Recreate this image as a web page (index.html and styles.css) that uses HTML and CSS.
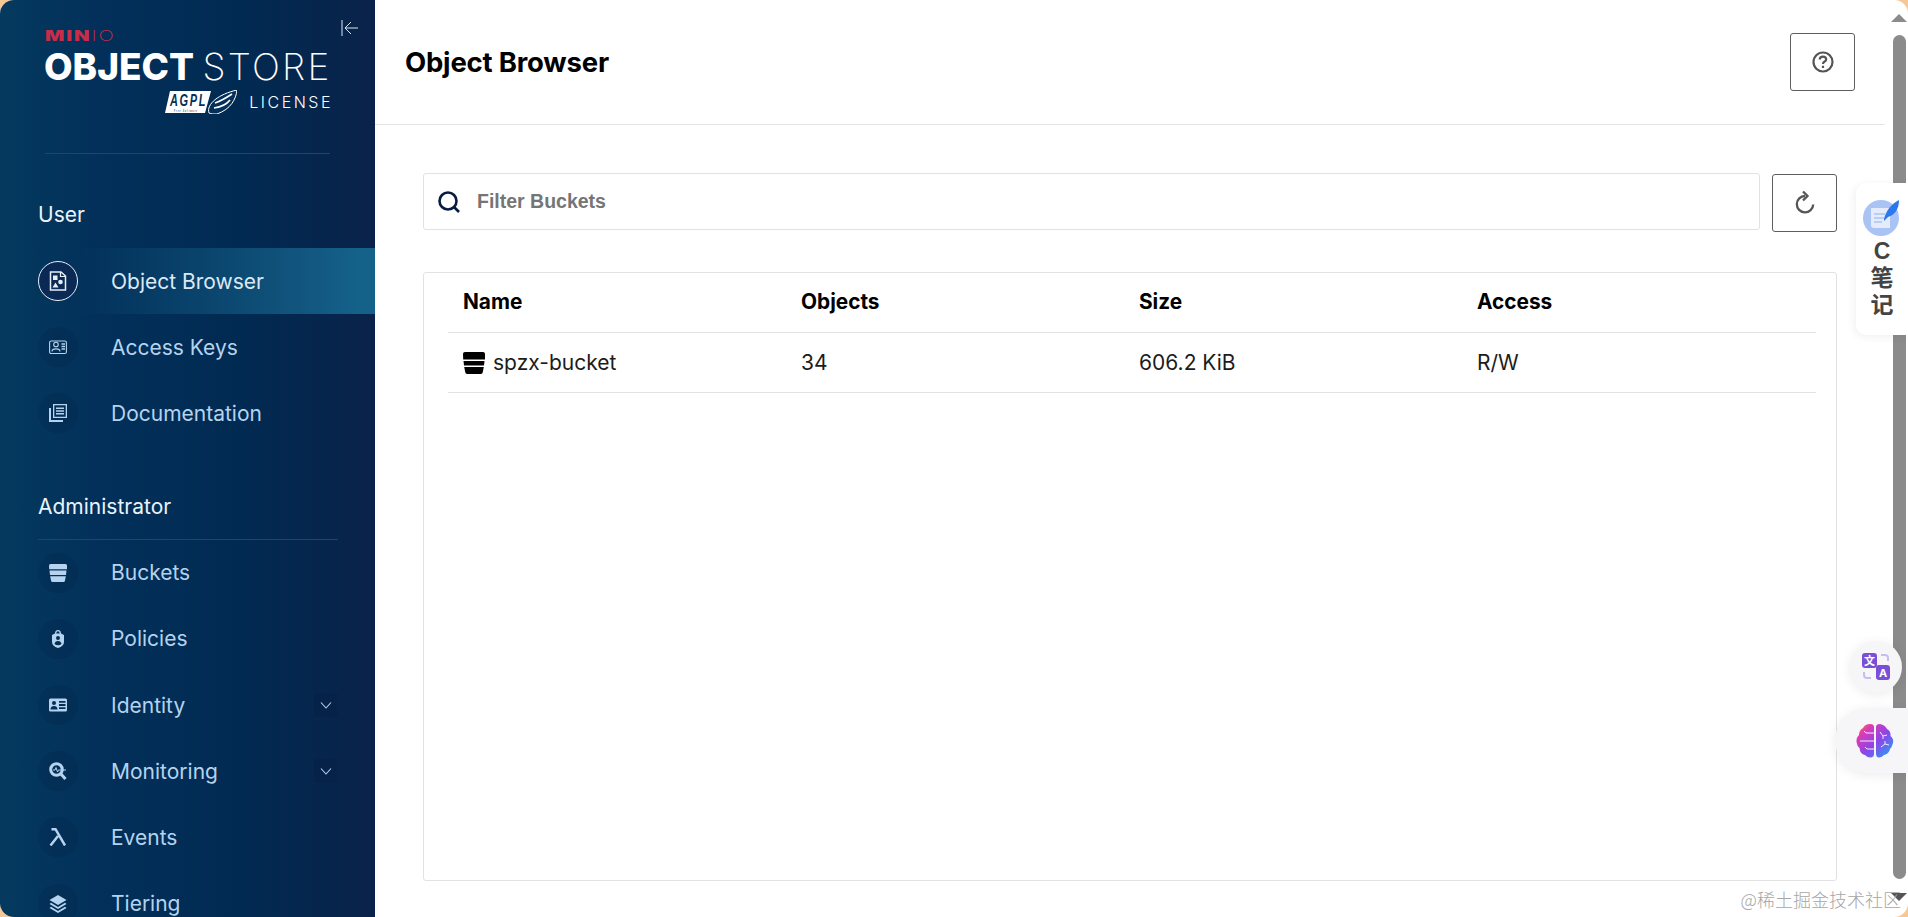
FILE: index.html
```html
<!DOCTYPE html>
<html lang="en">
<head>
  <meta charset="UTF-8" />
  <title>Object Browser</title>
  <link rel="stylesheet" href="styles.css">
</head>
<body>
<div class="page">

  <aside class="sidebar">
    <div class="brand">
      <div class="logo">
        <div class="logo-minio"><b>MIN</b><span>IO</span></div>
        <div class="logo-product"><b>OBJECT</b> <span>STORE</span></div>
        <div class="logo-license">
          <svg class="agpl" width="72" height="24" viewBox="0 0 72 24">
            <path d="M5 1H46L40 23H0Z" fill="#fff"/>
            <text x="5" y="15.500" class="agpl-text" textLength="37" lengthAdjust="spacingAndGlyphs">AGPL</text>
            <text x="9" y="21.500" class="agpl-small" textLength="24" lengthAdjust="spacingAndGlyphs">Free Software</text>
            <path d="M44 23C41 14 54 4 72 0C71 9 66 19 52 24C49 24 46 24 44 23Z" fill="#04305a" stroke="#fff" stroke-width="1"/>
            <path d="M50 13C56 11 61 8 67 4M49 18C56 17 62 14 65 10" fill="none" stroke="#fff" stroke-width="1.600"/>
          </svg>
          <span>LICENSE</span>
        </div>
      </div>
      <button class="collapse" title="Collapse">
        <svg width="18" height="18" viewBox="0 0 18 18" fill="none" stroke="currentColor" stroke-width="1">
          <path d="M1 1V17M17 9H4M10 3L4 9L10 15"/>
        </svg>
      </button>
    </div>

    <div class="nav-label nav-label-user">User</div>
    <a class="nav-item active">
      <span class="nav-icon">
        <svg width="18" height="20" viewBox="0 0 18 20"><path d="M1.500 1H12L16.500 5V19H1.500Z" fill="none" stroke="currentColor" stroke-width="1.500"/><path d="M11.500 1V5.500H16.500" fill="none" stroke="currentColor" stroke-width="1.200"/><rect x="4" y="4.500" width="4.500" height="4.500" fill="currentColor"/><circle cx="11.500" cy="11" r="2.300" fill="currentColor"/><path d="M6.500 11.500L9.500 16.500H3.500Z" fill="currentColor"/></svg>
      </span>
      <span>Object Browser</span>
    </a>
    <a class="nav-item">
      <span class="nav-icon">
        <svg width="18" height="18" viewBox="0 0 18 18" fill="none" stroke="currentColor" stroke-width="1.100"><rect x="0.600" y="3" width="16.800" height="12.500" rx="1.500"/><circle cx="7" cy="6.500" r="2.300"/><path d="M3 13.500C3 10 11 10 11 13.500"/><path d="M12.500 6H16M12.500 8.500H16M12.500 11H16" stroke-width="1.300"/></svg>
      </span>
      <span>Access Keys</span>
    </a>
    <a class="nav-item">
      <span class="nav-icon">
        <svg width="18" height="18" viewBox="0 0 18 18" fill="currentColor"><path fill-rule="evenodd" d="M4 0H18V14H4ZM5.300 1.300V12.700H16.700V1.300ZM7 3.500H15V5H7ZM7 6.300H15V7.800H7ZM7 9.100H15V10.600H7Z"/><path d="M0 4H2V16H14V18H0Z"/></svg>
      </span>
      <span>Documentation</span>
    </a>

    <div class="nav-label nav-label-admin">Administrator</div>
    <a class="nav-item">
      <span class="nav-icon">
        <svg width="18" height="18" viewBox="0 0 18 18" fill="currentColor"><path d="M0 1.500Q0 0 1.500 0H16.500Q18 0 18 1.500V5.200H0.200ZM0.500 6.500H17.500L17 11H1ZM1.200 12.300H16.800L16 16.500Q15.800 18 14.500 18H3.500Q2.200 18 2 16.500Z"/></svg>
      </span>
      <span>Buckets</span>
    </a>
    <a class="nav-item">
      <span class="nav-icon">
        <svg width="18" height="18" viewBox="0 0 18 18" fill="currentColor"><path fill-rule="evenodd" d="M9 0Q12 0 12 3.500L15 5V12Q15 16 9 18Q3 16 3 12V5L6 3.500Q6 0 9 0ZM9 1.300Q7.300 1.300 7.300 3.500H10.700Q10.700 1.300 9 1.300ZM9 6A2 2 0 1 0 9 10A2 2 0 1 0 9 6ZM5.500 14Q9 16.500 12.500 14Q12 11 9 11Q6 11 5.500 14Z"/></svg>
      </span>
      <span>Policies</span>
    </a>
    <a class="nav-item">
      <span class="nav-icon">
        <svg width="18" height="18" viewBox="0 0 18 18" fill="currentColor"><path fill-rule="evenodd" d="M1.500 2.500H16.500Q18 2.500 18 4V14Q18 15.500 16.500 15.500H1.500Q0 15.500 0 14V4Q0 2.500 1.500 2.500ZM5 5A2 2 0 1 0 5 9A2 2 0 1 0 5 5ZM1.500 13.500H8.500Q8.500 10 5 10Q1.500 10 1.500 13.500ZM10 5V6.800H16.500V5ZM10 8.100V9.900H16.500V8.100ZM10 11.200V13H16.500V11.200Z"/></svg>
      </span>
      <span>Identity</span>
      <span class="chevron"><svg width="12" height="7" viewBox="0 0 12 7" fill="none" stroke="currentColor" stroke-width="1.100"><path d="M1 0.500L6 6L11 0.500"/></svg></span>
    </a>
    <a class="nav-item">
      <span class="nav-icon">
        <svg width="18" height="18" viewBox="0 0 18 18" fill="none" stroke="currentColor"><circle cx="7.500" cy="7.500" r="5.800" stroke-width="3"/><path d="M11.500 11.500L16.500 17" stroke-width="3"/><path d="M4 8H6L7 5.500L8.500 10L9.500 8H17" stroke-width="1" /></svg>
      </span>
      <span>Monitoring</span>
      <span class="chevron"><svg width="12" height="7" viewBox="0 0 12 7" fill="none" stroke="currentColor" stroke-width="1.100"><path d="M1 0.500L6 6L11 0.500"/></svg></span>
    </a>
    <a class="nav-item">
      <span class="nav-icon">
        <svg width="18" height="18" viewBox="0 0 18 18" fill="none" stroke="currentColor" stroke-width="2.500"><path d="M2.500 1.200H6.500L16 17.500M9 8L1.500 17.500"/></svg>
      </span>
      <span>Events</span>
    </a>
    <a class="nav-item">
      <span class="nav-icon">
        <svg width="18" height="18" viewBox="0 0 18 18" fill="currentColor"><path d="M9 0L17.500 5L9 10L0.500 5Z"/><path d="M2 7.800L9 12L16 7.800L17.500 9L9 14L0.500 9Z"/><path d="M2 11.800L9 16L16 11.800L17.500 13L9 18L0.500 13Z"/></svg>
      </span>
      <span>Tiering</span>
    </a>
  </aside>

  <main class="main">
    <header class="topbar">
      <h1>Object Browser</h1>
      <button class="btn-outline btn-help" title="Help">
        <svg width="22" height="22" viewBox="0 0 22 22" fill="none" stroke="currentColor" stroke-width="2.200"><circle cx="11" cy="11" r="9.500"/><path d="M7.800 8.500Q7.800 5.600 11 5.600Q14.200 5.600 14.200 8.300Q14.200 9.800 12.400 10.700Q11 11.400 11 13"/><path d="M11 14.800V17"/></svg>
      </button>
    </header>

    <div class="content">
      <div class="filter-row">
        <div class="filter">
          <svg width="22" height="22" viewBox="0 0 22 22" fill="none" stroke="#081c42" stroke-width="2.600"><circle cx="10" cy="10" r="8.500"/><path d="M16 16L21 21"/></svg>
          <span>Filter Buckets</span>
        </div>
        <button class="btn-outline btn-refresh" title="Refresh">
          <svg width="20" height="24" viewBox="0 0 20 24" fill="none" stroke="currentColor" stroke-width="2.300"><path d="M10 5A8.200 8.200 0 1 0 18.200 13.500"/><path d="M8 0.500L12.500 5L8 9.500"/></svg>
        </button>
      </div>

      <section class="buckets">
        <div class="row row-head">
          <div>Name</div>
          <div>Objects</div>
          <div>Size</div>
          <div>Access</div>
        </div>
        <div class="row">
          <div class="bucket-name">
            <svg width="22" height="22" viewBox="0 0 22 22" fill="#000"><path d="M0 2Q0 0 2 0H20Q22 0 22 2V7.500H0.200ZM0.500 9H21.500L21 13.500H1ZM1.200 15H20.800L19.800 20Q19.600 22 17.800 22H4.200Q2.400 22 2.200 20Z"/></svg>
            <span>spzx-bucket</span>
          </div>
          <div>34</div>
          <div>606.2 KiB</div>
          <div>R/W</div>
        </div>
      </section>
    </div>
  </main>

  <div class="scrollbar">
    <i class="arrow-up"></i>
    <i class="thumb"></i>
    <i class="arrow-down"></i>
  </div>

  <div class="note-widget">
    <svg width="44" height="40" viewBox="0 0 44 40">
      <circle cx="20" cy="21" r="18" fill="#a9c3f4"/>
      <path d="M10 11H29V31L13 31Q10 31 10 28Z" fill="#e4ecfb"/>
      <path d="M13 17H24M13 21H23M13 25H21" stroke="#a9c3f4" stroke-width="1.300"/>
      <path d="M23 22C25 14 30 7 38 3C38 12 34 18 27 20L23 24Z" fill="#2d77ee"/>
    </svg>
    <span>C</span><span>笔</span><span>记</span>
  </div>

  <button class="float-btn float-translate" title="Translate">
    <svg width="28" height="28" viewBox="0 0 28 28">
      <rect x="0" y="0" width="15" height="15" rx="3" fill="#7a4fd8"/>
      <text x="7.500" y="11.500" class="icon-text">文</text>
      <rect x="14" y="12" width="14" height="15" rx="3" fill="#7a4fd8"/>
      <text x="21" y="24" class="icon-text">A</text>
      <path d="M19 2H23Q26 2 26 5V8M2 19V22Q2 25 5 25H9" fill="none" stroke="#c9bdf0" stroke-width="2"/>
    </svg>
  </button>

  <button class="float-btn float-brain" title="AI">
    <svg width="38" height="34" viewBox="0 0 38 34">
      <defs>
        <linearGradient id="brainGrad" x1="0" y1="0" x2="1" y2="1">
          <stop offset="0" stop-color="#f58a24"/>
          <stop offset="0.220" stop-color="#dc3bb4"/>
          <stop offset="0.550" stop-color="#8a46ea"/>
          <stop offset="0.950" stop-color="#2aa0f5"/>
        </linearGradient>
      </defs>
      <path d="M18 3Q18 0 14 0Q9 0 7 4Q3 6 3 11Q0 14 0.500 18Q1 22 3.500 24Q4 30 9 31Q12 34 15 33.500Q18 33 18 30ZM20 3Q20 0 24 0Q29 1 31 5Q35 7 34.500 12Q38 15 37 19Q36 23 34 25Q33 30 28 31Q25 34 22 33.500Q20 33 20 30Z" fill="url(#brainGrad)"/>
      <path d="M18 9H10L8 7M18 17H4M18 25H11L9 23M24 8L27 12L31 11M27 12V15M25 23L29 20L33 21M29 20V17" fill="none" stroke="#f6e9fb" stroke-width="1"/>
    </svg>
  </button>

  <div class="watermark">@稀土掘金技术社区</div>
</div>
</body>
</html>
```

FILE: styles.css
```css
* { box-sizing: border-box; margin: 0; padding: 0; }
html, body { height: 100%; overflow: hidden; }
body {
  background: #f6c896;
  font-family: Inter, sans-serif;
  color: #000;
}
button { font: inherit; background: none; cursor: pointer; }

.page {
  position: relative;
  height: 917px;
  display: flex;
  background: #fff;
  border-radius: 14px;
  overflow: hidden;
}

/* sidebar */
.sidebar {
  width: 375px;
  flex: none;
  height: 100%;
  overflow: hidden;
  background: linear-gradient(90deg, #053a5e 0%, #02305a 25%, #012a52 65%, #0a2249 100%);
  color: #b5d3ee;
}
.brand {
  height: 154px;
  margin: 0 45px;
  padding-top: 17px;
  display: flex;
  justify-content: space-between;
  align-items: flex-start;
  border-bottom: 1px solid #144a70;
}
.logo { width: 285px; color: #fff; font-family: Inter, sans-serif; flex: none; }
.logo-minio {
  margin-top: 10px;
  height: 17px;
  line-height: 17px;
  font-size: 15px;
  letter-spacing: 1.400px;
  color: #c72c48;
  white-space: nowrap;
  transform: scaleX(1.350);
  transform-origin: left;
}
.logo-minio b { font-weight: 900; }
.logo-minio span { font-weight: 200; }
.logo-product {
  margin-top: 3px;
  margin-left: -1px;
  height: 40px;
  line-height: 40px;
  font-size: 37px;
  word-spacing: -2px;
  white-space: nowrap;
}
.logo-product b { font-weight: 800; }
.logo-product span { font-weight: 200; letter-spacing: 2.200px; }
.logo-license {
  display: flex;
  justify-content: flex-end;
  align-items: center;
  gap: 12px;
  margin-top: 3px;
  font-size: 16px;
  font-weight: 300;
  letter-spacing: 2.500px;
}
.logo-license span { margin-right: -3px; }
.agpl-text { font: italic 700 17px "Liberation Sans", sans-serif; fill: #04305a; }
.agpl-small { font: italic 700 4px "Liberation Sans", sans-serif; fill: #04305a; }
.collapse {
  border: none;
  color: #dbe8f4;
  margin: 2px -29px 0 0;
  height: 22px;
}

.nav-label {
  margin: 0 37px 0 38px;
  color: #eaf3fa;
  font-size: 21px;
  line-height: 24px;
}
.nav-label-user { padding-top: 49px; height: 94px; }
.nav-label-admin {
  padding-top: 48px;
  height: 93px;
  border-bottom: 1px solid #144a70;
}
.nav-item {
  height: 66.200px;
  display: flex;
  align-items: center;
  padding: 0 37px 0 38px;
  font-size: 21px;
}
.nav-item.active {
  background: linear-gradient(90deg, rgba(20, 97, 138, 0) 20%, #14618a 95%);
  color: #dce9f5;
}
.nav-icon {
  width: 40px;
  height: 40px;
  flex: none;
  margin-right: 33px;
  border-radius: 50%;
  background: rgba(4, 30, 70, 0.22);
  display: flex;
  align-items: center;
  justify-content: center;
}
.nav-item.active .nav-icon {
  background: #0a2a55;
  border: 1px solid #e6eff7;
  color: #e6eff7;
}
.chevron {
  margin-left: auto;
  width: 24px;
  height: 24px;
  background: #062248;
  border-radius: 4px;
  display: flex;
  align-items: center;
  justify-content: center;
}

/* main */
.main {
  flex: 1;
  min-width: 0;
  display: flex;
  flex-direction: column;
}
.topbar {
  height: 125px;
  flex: none;
  padding: 0 30px;
  display: flex;
  align-items: center;
  justify-content: space-between;
  border-bottom: 1px solid #e5e5e5;
}
.topbar h1 {
  font-size: 27.500px;
  font-weight: 700;
  letter-spacing: -0.200px;
}
.btn-outline {
  border: 1px solid #5e5e5e;
  border-radius: 3px;
  color: #555;
  display: flex;
  align-items: center;
  justify-content: center;
  width: 65px;
  height: 58px;
}
.content {
  flex: 1;
  min-height: 0;
  padding: 48px 48px 36px;
  display: flex;
  flex-direction: column;
}
.filter-row {
  display: flex;
  gap: 12px;
  margin-bottom: 39px;
  height: 60px;
  align-items: flex-start;
}
.filter {
  flex: 1;
  height: 57px;
  border: 1px solid #e2e2e2;
  border-radius: 3px;
  display: flex;
  align-items: center;
  gap: 17px;
  padding-left: 14px;
  font: 700 19.500px "Liberation Sans", sans-serif;
  color: #757575;
}
.btn-refresh { margin-top: 1px; }
.buckets {
  flex: 1;
  border: 1px solid #e2e2e2;
  border-radius: 3px;
  padding-left: 24px;
  padding-right: 20px;
}
.row {
  height: 60px;
  display: grid;
  grid-template-columns: repeat(4, 338px);
  padding-left: 15px;
  align-items: center;
  border-bottom: 1px solid #e2e2e2;
  font-size: 21px;
  color: #1c1c1c;
}
.row-head {
  font-weight: 700;
  color: #000;
  padding-bottom: 2px;
  font-size: 20.800px;
}
.bucket-name {
  display: flex;
  align-items: center;
  gap: 8px;
}

/* browser scrollbar */
.scrollbar {
  width: 23px;
  flex: none;
  display: flex;
  flex-direction: column;
  align-items: center;
  padding-left: 5px;
  padding-top: 14px;
}
.arrow-up {
  border: 8px solid transparent;
  border-top: 0;
  border-bottom-color: #8b8b8b;
}
.thumb {
  display: block;
  width: 13px;
  height: 844px;
  margin-top: 13px;
  background: #8b8b8b;
  border-radius: 7px;
}
.arrow-down {
  margin-top: 14px;
  border: 8px solid transparent;
  border-bottom: 0;
  border-top-color: #555;
}

/* extension widgets sitting over the page */
.note-widget {
  position: absolute;
  top: 183px;
  right: 0;
  width: 52px;
  height: 152px;
  padding-top: 14px;
  background: #fff;
  border-radius: 10px 0 0 10px;
  box-shadow: -2px 2px 8px rgba(0, 0, 0, 0.06);
  display: flex;
  flex-direction: column;
  align-items: center;
  font: 700 23px/27px "Liberation Sans", "Noto Sans CJK SC", sans-serif;
  color: #444;
}
.note-widget svg { flex: none; margin-bottom: 1px; margin-left: 2px; }
.float-btn {
  position: absolute;
  border: none;
  background: #f6f6f8;
  display: flex;
  align-items: center;
  box-shadow: 0 2px 12px rgba(0, 0, 0, 0.08);
}
.float-translate {
  top: 641px;
  right: 6px;
  width: 52px;
  height: 52px;
  border-radius: 50%;
  justify-content: center;
}
.icon-text { font: 700 11px Inter, "Noto Sans CJK SC", sans-serif; fill: #fff; text-anchor: middle; }
.float-brain {
  top: 708px;
  right: 0;
  width: 73px;
  height: 65px;
  border-radius: 33px 0 0 33px;
  padding-left: 21px;
}
.watermark {
  position: absolute;
  right: 7px;
  bottom: 7px;
  font: 300 18px/22px "Noto Sans CJK SC", sans-serif;
  color: #a6a6a6;
  white-space: nowrap;
}
```
